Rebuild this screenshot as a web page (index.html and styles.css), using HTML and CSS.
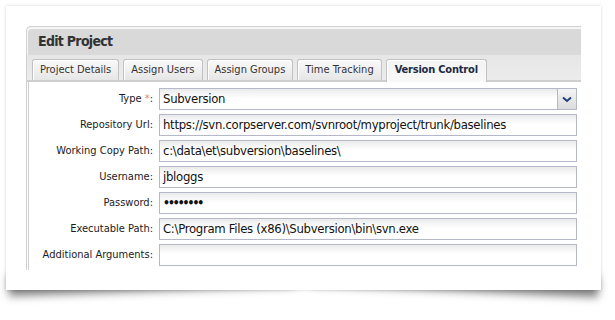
FILE: index.html
```html
<!DOCTYPE html>
<html>
<head>
<meta charset="utf-8">
<link rel="stylesheet" href="styles.css">
</head>
<body>
<div class="card">
  <div class="panel">
    <div class="panel-header">Edit Project</div>
    <div class="tabstrip">
      <div class="tab">Project Details</div>
      <div class="tab">Assign Users</div>
      <div class="tab">Assign Groups</div>
      <div class="tab">Time Tracking</div>
      <div class="tab active">Version Control</div>
    </div>
    <div class="panel-body">
      <div class="form">
        <label class="lbl">Type <span class="req">*</span>:</label>
        <div class="field select"><span class="val">Subversion</span><span class="trigger"><svg width="10" height="7" viewBox="0 0 10 7"><path d="M1 1.5 L5 5 L9 1.5" fill="none" stroke="#1d3f7a" stroke-width="2"/></svg></span></div>
        <label class="lbl">Repository Url:</label>
        <div class="field"><span class="val">https://svn.corpserver.com/svnroot/myproject/trunk/baselines</span></div>
        <label class="lbl">Working Copy Path:</label>
        <div class="field"><span class="val">c:\data\et\subversion\baselines\</span></div>
        <label class="lbl">Username:</label>
        <div class="field"><span class="val">jbloggs</span></div>
        <label class="lbl">Password:</label>
        <div class="field"><span class="val pw">••••••••</span></div>
        <label class="lbl">Executable Path:</label>
        <div class="field"><span class="val">C:\Program Files (x86)\Subversion\bin\svn.exe</span></div>
        <label class="lbl">Additional Arguments:</label>
        <div class="field"><span class="val"></span></div>
      </div>
    </div>
  </div>
</div>
</body>
</html>
```
FILE: styles.css
```css
html {
  background: #fff;
}
html, body {
  margin: 0;
  padding: 0;
}
body {
  width: 615px;
  height: 320px;
  overflow: hidden;
  font-family: "DejaVu Sans Condensed", "DejaVu Sans", sans-serif;
  font-stretch: condensed;
}
.card {
  position: relative;
  margin: 6px 0 0 6px;
  width: 595px;
  height: 284px;
  background: #fff;
  box-shadow: 0 0 3px rgba(0,0,0,0.18);
  padding: 20px 0 0 20px;
  box-sizing: border-box;
}
.card::before, .card::after {
  content: "";
  position: absolute;
  z-index: -1;
  bottom: 12px;
  width: 48%;
  height: 20px;
  box-shadow: 0 13px 8px rgba(0,0,0,0.5);
}
.card::before {
  left: 2px;
  transform: rotate(-2deg);
}
.card::after {
  right: 2px;
  transform: rotate(2.5deg);
}
.panel {
  width: 555px;
  height: 244px;
  display: flex;
  flex-direction: column;
}
.panel-header {
  height: 26px;
  box-sizing: content-box;
  border: 1px solid #d2d2d2;
  border-bottom: none;
  border-right: none;
  border-radius: 5px 0 0 0;
  box-shadow: inset 1px 2px 0 #f6f6f6;
  background: #d9d9d9;
  padding: 2px 0 0 11px;
  font-weight: bold;
  font-size: 14px;
  letter-spacing: -0.7px;
  line-height: 24px;
  color: #333;
}
.tabstrip {
  height: 27px;
  box-sizing: border-box;
  background: linear-gradient(#e6e6e6, #ececec);
  border-left: 1px solid #d0d0d0;
  border-bottom: 2px solid #cfcfcf;
  padding: 4px 0 0 5px;
  display: flex;
  gap: 4px;
  align-items: flex-end;
}
.tab {
  height: 21px;
  box-sizing: border-box;
  border: 1px solid #c2c2c2;
  border-bottom: none;
  border-radius: 3px 3px 0 0;
  background: linear-gradient(#fafafa, #e6e6e6);
  box-shadow: inset 1px 1px 0 #fff;
  padding: 0 7px;
  font-size: 11px;
  line-height: 20px;
  color: #333;
}
.tab.active {
  height: 23px;
  margin-bottom: -2px;
  background: linear-gradient(#f3f3f3, #f8f8f8);
  font-weight: bold;
  color: #1c2a44;
  padding: 0 8px;
  letter-spacing: -0.2px;
}
.panel-body {
  flex: 1;
  border-left: 3px double #cfcfcf;
  background: #fff;
  padding-top: 6px;
}
.form {
  display: grid;
  grid-template-columns: 124px 418px;
  column-gap: 6px;
  row-gap: 4px;
}
.lbl {
  text-align: right;
  font-size: 11px;
  line-height: 22px;
  color: #1a1a22;
}
.req {
  color: #f07a7a;
}
.field {
  height: 22px;
  box-sizing: border-box;
  border: 1px solid #b5b8c8;
  background: linear-gradient(#eaeaea, #fff 45%);
  display: flex;
  align-items: center;
}
.val {
  flex: 1;
  padding-left: 3px;
  font-size: 13px;
  letter-spacing: -0.3px;
  line-height: 20px;
  color: #111;
  white-space: nowrap;
  overflow: hidden;
}
.pw {
  font-size: 12px;
  font-weight: bold;
  letter-spacing: -2px;
}
.trigger {
  width: 19px;
  height: 20px;
  box-sizing: border-box;
  border-left: 1px solid #b5b8c8;
  background: linear-gradient(#f4f4f4, #dcdcdc);
  display: flex;
  align-items: center;
  justify-content: center;
}
```
